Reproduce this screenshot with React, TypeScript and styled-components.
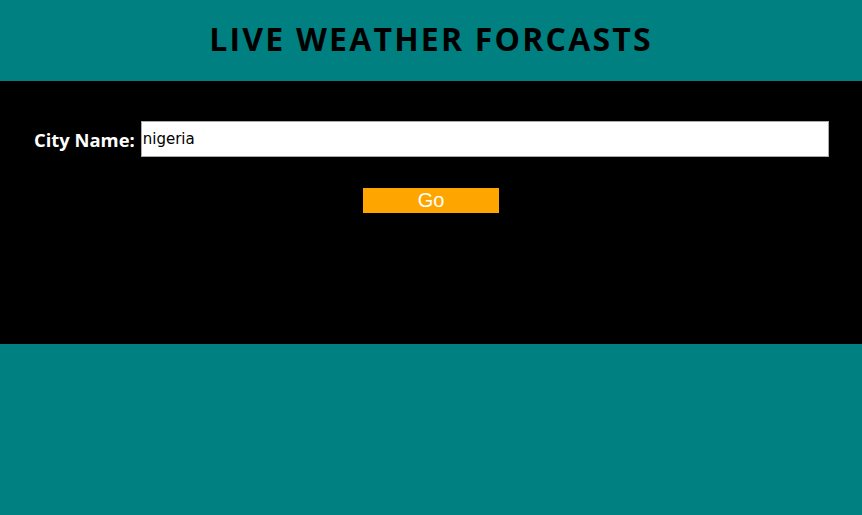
import React, { useState } from 'react';
import styled, { createGlobalStyle } from 'styled-components';

const GlobalStyle = createGlobalStyle`
  html, body {
    margin: 0;
    padding: 0;
    background: #008080;
    height: 100%;
  }
`;

const Page = styled.div`
  display: flex;
  flex-direction: column;
  width: 100%;
  min-height: 515px;
  background: #008080;
`;

const Header = styled.header`
  height: 81px;
  display: flex;
  align-items: center;
  justify-content: center;
`;

const Title = styled.h1`
  margin: 0;
  padding-bottom: 4px;
  font-family: "Comic Sans MS", "Open Sans", "DejaVu Sans", sans-serif;
  font-weight: 700;
  font-size: 32px;
  letter-spacing: 2.2px;
  color: #000;
`;

const Panel = styled.main`
  height: 263px;
  background: #000;
  display: flex;
  flex-direction: column;
  align-items: center;
  padding-top: 40px;
  box-sizing: border-box;
`;

const Row = styled.form`
  width: 100%;
  display: flex;
  align-items: center;
  gap: 6px;
  padding: 0 33px 0 34px;
  box-sizing: border-box;
`;

const Label = styled.label`
  font-family: "Comic Sans MS", "Open Sans", "DejaVu Sans", sans-serif;
  font-weight: 700;
  font-size: 18.4px;
  color: #fff;
  white-space: nowrap;
`;

const CityInput = styled.input`
  flex: 1;
  height: 36px;
  box-sizing: border-box;
  border: 1px solid #aaa;
  background: #fff;
  padding: 0 1px;
  font-family: "DejaVu Sans", sans-serif;
  font-size: 15px;
  color: #000;
  outline: none;
`;

const GoButton = styled.button`
  margin-top: 31px;
  width: 136px;
  height: 25px;
  border: none;
  background: #ffa500;
  color: #fff;
  font-family: "Liberation Sans", Arial, sans-serif;
  font-size: 20px;
  line-height: 25px;
  padding: 0;
  cursor: pointer;
`;

export default function App() {
  const [city, setCity] = useState('nigeria');

  return (
    <>
      <GlobalStyle />
      <Page>
        <Header>
          <Title>LIVE WEATHER FORCASTS</Title>
        </Header>
        <Panel>
          <Row onSubmit={(e) => e.preventDefault()}>
            <Label htmlFor="city">City Name:</Label>
            <CityInput
              id="city"
              type="text"
              value={city}
              onChange={(e) => setCity(e.target.value)}
            />
          </Row>
          <GoButton type="button">Go</GoButton>
        </Panel>
      </Page>
    </>
  );
}
